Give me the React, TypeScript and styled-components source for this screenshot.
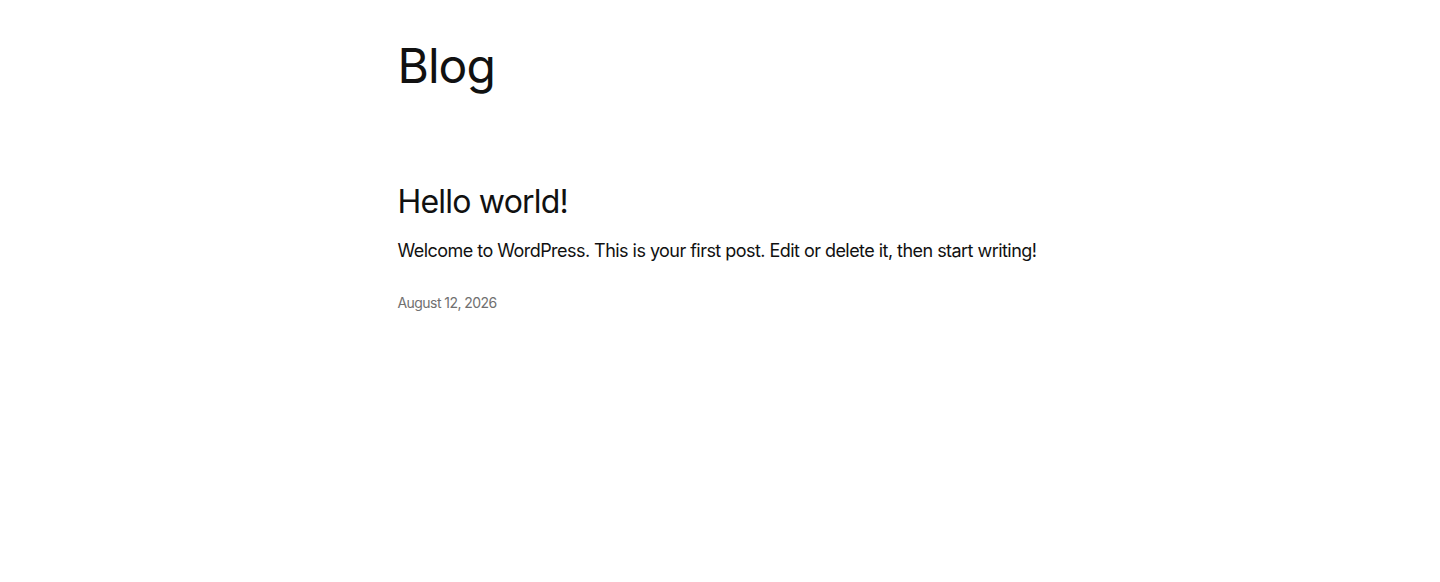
import React from 'react';
import styled, {createGlobalStyle} from 'styled-components';

const GlobalStyle = createGlobalStyle`
  html, body {
    margin: 0;
    padding: 0;
    background: #fff;
  }
  body {
    font-family: Inter, "Noto Sans", sans-serif;
    color: #111111;
    -webkit-font-smoothing: antialiased;
  }
`

const posts = [
    {
        title: 'Hello world!',
        excerpt: 'Welcome to WordPress. This is your first post. Edit or delete it, then start writing!',
        date: 'August 12, 2026',
    },
]

export default function App() {
    return (
        <>
            <GlobalStyle/>
            <Main>
                <PageTitle>Blog</PageTitle>
                <PostList>
                    {posts.map(post => (
                        <Post key={post.title}>
                            <PostTitle>{post.title}</PostTitle>
                            <Excerpt>{post.excerpt}</Excerpt>
                            <PostDate>{post.date}</PostDate>
                        </Post>
                    ))}
                </PostList>
            </Main>
        </>
    );
}

const Main = styled.main`
  width: 645px;
  margin: 0 auto;
  padding-top: 37px;
  display: flex;
  flex-direction: column;
`

const PageTitle = styled.h1`
  margin: 0;
  font-size: 48px;
  font-weight: 400;
  line-height: 1.2;
  letter-spacing: -0.02em;
`

const PostList = styled.div`
  margin-top: 88px;
  display: flex;
  flex-direction: column;
`

const Post = styled.article`
  display: flex;
  flex-direction: column;
`

const PostTitle = styled.h2`
  margin: 0;
  font-size: 32px;
  font-weight: 400;
  line-height: 1.2;
  letter-spacing: -0.025em;
`

const Excerpt = styled.p`
  margin: 17px 0 0;
  font-size: 18px;
  line-height: 1.4;
  letter-spacing: -0.03em;
  white-space: nowrap;
`

const PostDate = styled.time`
  margin-top: 31px;
  font-size: 14px;
  letter-spacing: -0.04em;
  color: #707070;
`
